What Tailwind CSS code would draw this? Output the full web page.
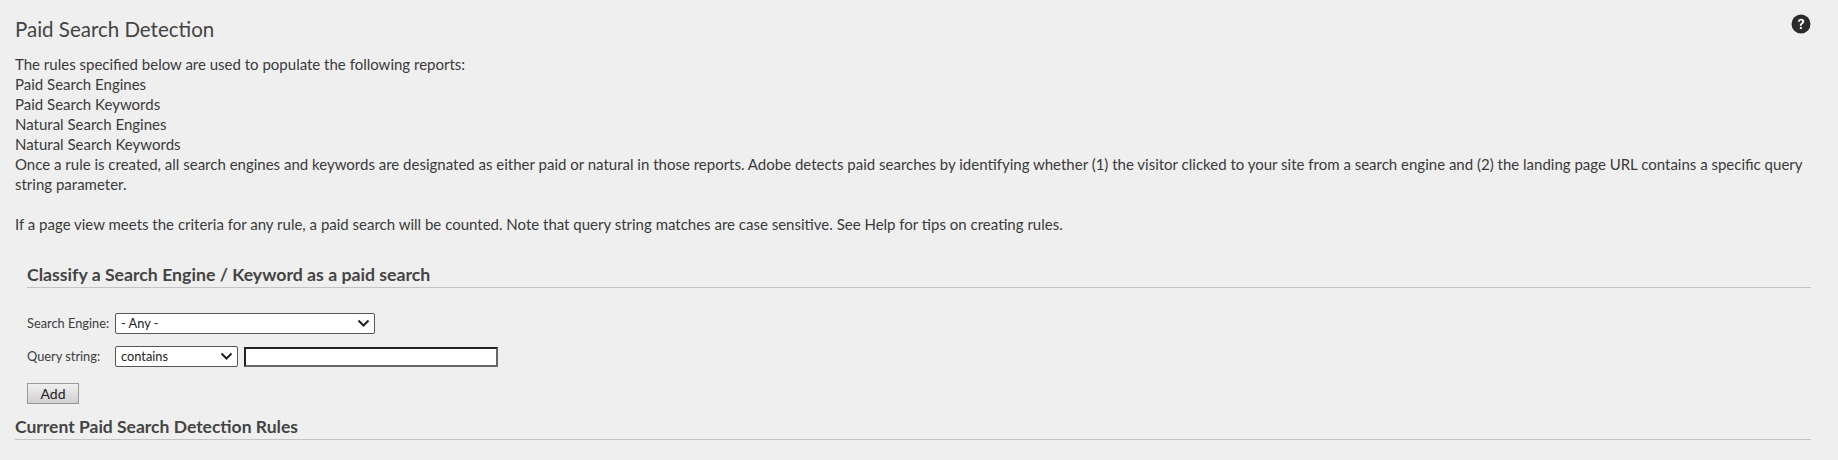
<!DOCTYPE html>
<html lang="en">
<head>
  <meta charset="UTF-8" />
  <title>Paid Search Detection</title>
  <script src="https://cdn.jsdelivr.net/npm/@tailwindcss/browser@4"></script>
</head>
<body class="h-[460px] overflow-hidden bg-[#efefef] font-['Lato',sans-serif] text-[#3d3d3d]">
  <div class="px-[15px] pt-[15px]">
    <!-- title + help -->
    <div class="flex items-start justify-between pr-[12px]">
      <h1 class="text-[20.500px] leading-[28px] text-[#444]">Paid Search Detection</h1>
      <svg class="-mt-[1px]" width="20" height="20" viewBox="0 0 20 20">
        <circle cx="10" cy="10" r="9.500" fill="#2b2b2b"/>
        <path d="M6.800 7.600c.2-1.900 1.500-2.900 3.300-2.900 1.900 0 3.200 1.100 3.200 2.700 0 1.300-.8 1.900-1.600 2.500-.7.5-1 .8-1 1.600v.3H8.900v-.5c0-1.200.5-1.800 1.300-2.400.6-.5 1-.8 1-1.400 0-.6-.5-1-1.100-1-.7 0-1.200.4-1.300 1.200z" fill="#fff"/>
        <rect x="8.900" y="12.900" width="1.900" height="2" fill="#fff"/>
      </svg>
    </div>

    <div class="mt-[11px] text-[15px] leading-[20px] text-[#3a3a3a]">
      <p>The rules specified below are used to populate the following reports:</p>
      <p>Paid Search Engines</p>
      <p>Paid Search Keywords</p>
      <p>Natural Search Engines</p>
      <p>Natural Search Keywords</p>
      <p>Once a rule is created, all search engines and keywords are designated as either paid or natural in those reports. Adobe detects paid searches by identifying whether (1) the visitor clicked to your site from a search engine and (2) the landing page URL contains a specific query string parameter.</p>
      <p class="mt-[20px]">If a page view meets the criteria for any rule, a paid search will be counted. Note that query string matches are case sensitive. See Help for tips on creating rules.</p>
    </div>

    <!-- classify form -->
    <section class="mt-[28px] ml-[12px] mr-[12px]">
      <h2 class="border-b border-[#c4c4c4] text-[17.700px] leading-[25px] font-bold text-[#444]">Classify a Search Engine / Keyword as a paid search</h2>
      <div class="mt-[25px] flex items-center text-[12.800px]">
        <label class="w-[88px]">Search Engine:</label>
        <div class="relative flex h-[21px] w-[260px] items-center rounded-[2px] border border-[#555] bg-white pl-[5px] text-[#222]">
          - Any -
          <svg class="absolute right-[4px] top-[5px]" width="13" height="9" viewBox="0 0 13 9"><path d="M1.500 1.500l5 5 5-5" fill="none" stroke="#222" stroke-width="2"/></svg>
        </div>
      </div>
      <div class="mt-[12px] flex items-center text-[12.800px]">
        <label class="w-[88px]">Query string:</label>
        <div class="relative flex h-[21px] w-[123px] items-center rounded-[2px] border border-[#555] bg-white pl-[5px] text-[#222]">
          contains
          <svg class="absolute right-[4px] top-[5px]" width="13" height="9" viewBox="0 0 13 9"><path d="M1.500 1.500l5 5 5-5" fill="none" stroke="#222" stroke-width="2"/></svg>
        </div>
        <input type="text" class="ml-[6px] h-[20px] w-[254px] border-2 border-t-[#222] border-l-[#222] border-r-[#666] border-b-[#666] bg-white" />
      </div>
      <button class="mt-[16px] block h-[21px] w-[52px] border border-[#999] bg-gradient-to-b from-[#f0f0f0] to-[#d0d0d0] text-[14px] leading-[18px] text-[#222]">Add</button>
    </section>

    <section class="mt-[10px] mr-[12px]">
      <h2 class="border-b border-[#c4c4c4] text-[17.500px] leading-[25px] font-bold text-[#444]">Current Paid Search Detection Rules</h2>
    </section>
  </div>
</body>
</html>
